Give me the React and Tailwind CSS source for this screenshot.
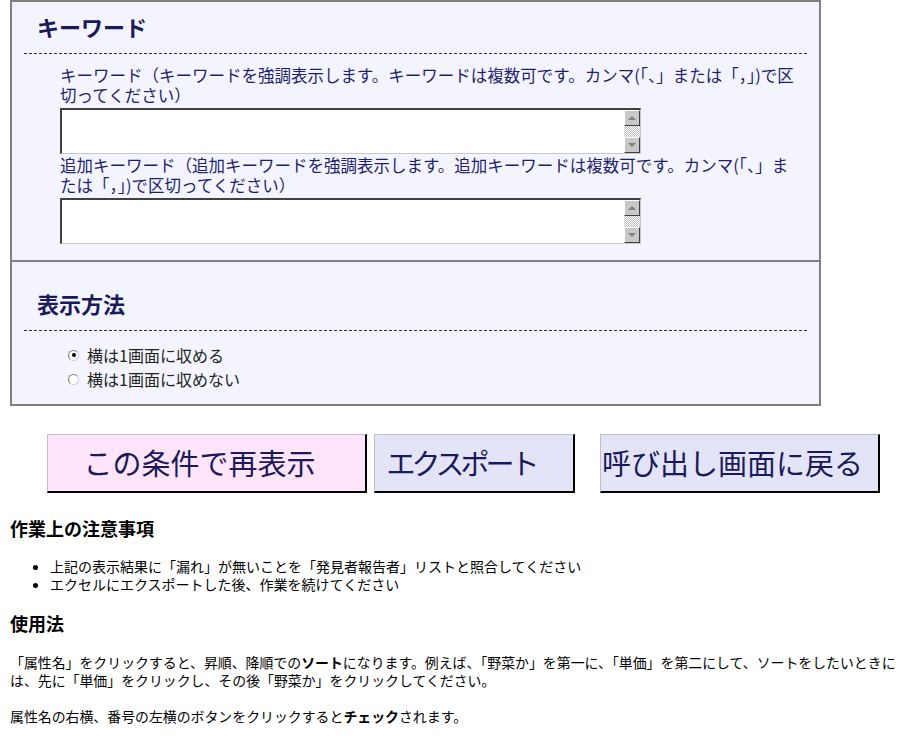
import React from 'react';

const jp = { fontFamily: '"Noto Sans CJK JP", "Noto Sans", sans-serif' };

function FakeTextarea() {
  return (
    <div className="flex w-[581px] h-[46px] bg-white border-t-2 border-l-2 border-b border-r border-t-[#404040] border-l-[#404040] border-b-[#c8c8c8] border-r-[#c8c8c8]">
      <textarea className="flex-1 resize-none outline-none border-0 bg-white px-1 text-[14px]" />
      <div className="flex flex-col w-[16px] shrink-0">
        <div className="h-[16px] flex items-center justify-center bg-[#c8c8c8] border border-t-white border-l-white border-b-[#404040] border-r-[#404040]">
          <span className="w-0 h-0 border-l-[4px] border-r-[4px] border-b-[4px] border-l-transparent border-r-transparent border-b-[#808080]" />
        </div>
        <div className="flex-1 bg-[repeating-conic-gradient(#c0c0c0_0_25%,#ffffff_0_50%)] bg-[length:2px_2px]" />
        <div className="h-[16px] flex items-center justify-center bg-[#c8c8c8] border border-t-white border-l-white border-b-[#404040] border-r-[#404040]">
          <span className="w-0 h-0 border-l-[4px] border-r-[4px] border-t-[4px] border-l-transparent border-r-transparent border-t-[#808080]" />
        </div>
      </div>
    </div>
  );
}

function Radio({ checked, label }) {
  return (
    <label className="flex items-center h-[24px] pl-[56px] text-[16px] text-[#222]">
      <span className="w-[11px] h-[11px] rounded-full bg-white border border-t-[#808080] border-l-[#808080] border-b-[#d0d0d0] border-r-[#d0d0d0] flex items-center justify-center">
        {checked && <span className="w-[4px] h-[4px] rounded-full bg-black" />}
      </span>
      <span className="ml-[8px]">{label}</span>
    </label>
  );
}

export default function App() {
  return (
    <div className="w-[916px] h-[746px] overflow-hidden bg-white text-black" style={jp}>
      {/* 条件パネル */}
      <div className="ml-[10px] w-[811px] bg-[#f4f4ff] border-2 border-[#808080]">
        <div className="pt-[10px] pb-[16px]">
          <h2 className="pl-[25px] h-[28px] leading-[28px] text-[22px] font-bold text-[#1a1a5a]">キーワード</h2>
          <div className="mx-[12px] mt-[13px] border-t border-dashed border-[#333]" />
          <div className="pl-[48px] mt-[11px] text-[16.5px] leading-[20px] text-[#1e1e6e]">
            <div className="whitespace-nowrap">キーワード（キーワードを強調表示します。キーワードは複数可です。カンマ(「、」または「，」)で区</div>
            <div className="whitespace-nowrap">切ってください）</div>
            <div className="mt-[3px]">
              <FakeTextarea />
            </div>
            <div className="mt-[1px] whitespace-nowrap">追加キーワード（追加キーワードを強調表示します。追加キーワードは複数可です。カンマ(「、」ま</div>
            <div className="whitespace-nowrap">たは「，」)で区切ってください）</div>
            <div className="mt-[3px]">
              <FakeTextarea />
            </div>
          </div>
        </div>
        <div className="border-t-2 border-[#808080] pt-[27px] pb-[13px]">
          <h2 className="pl-[25px] h-[28px] leading-[28px] text-[22px] font-bold text-[#1a1a5a]">表示方法</h2>
          <div className="mx-[12px] mt-[13px] border-t border-dashed border-[#333]" />
          <div className="mt-[12px]">
            <Radio checked label="横は1画面に収める" />
            <Radio label="横は1画面に収めない" />
          </div>
        </div>
      </div>

      {/* ボタン */}
      <div className="flex ml-[47px] mt-[28px]">
        <button className="w-[320px] h-[59px] pr-[14px] bg-[#ffe4fa] text-[29px] text-[#1a1a5a] border border-t-[#c0c0c0] border-l-[#c0c0c0] border-b-2 border-r-2 border-b-black border-r-black">
          この条件で再表示
        </button>
        <button className="ml-[7px] w-[201px] h-[59px] pr-[26px] bg-[#e4e4f8] text-[29px] tracking-[-4px] text-[#1a1a5a] border border-t-[#c0c0c0] border-l-[#c0c0c0] border-b-2 border-r-2 border-b-black border-r-black">
          エクスポート
        </button>
        <button className="ml-[25px] w-[280px] h-[59px] pr-[14px] bg-[#e4e4f8] text-[29px] text-[#1a1a5a] border border-t-[#c0c0c0] border-l-[#c0c0c0] border-b-2 border-r-2 border-b-black border-r-black">
          呼び出し画面に戻る
        </button>
      </div>

      {/* 説明 */}
      <div className="px-[10px]">
        <h3 className="mt-[23px] h-[24px] leading-[24px] text-[18px] font-bold">作業上の注意事項</h3>
        <ul className="mt-[17px] pl-[40px] list-disc text-[14px] leading-[18px]">
          <li>上記の表示結果に「漏れ」が無いことを「発見者報告者」リストと照合してください</li>
          <li>エクセルにエクスポートした後、作業を続けてください</li>
        </ul>
        <h3 className="mt-[18px] h-[24px] leading-[24px] text-[18px] font-bold">使用法</h3>
        <div className="mt-[18px] text-[13.9px] leading-[18px] whitespace-nowrap">
          <div>
            「属性名」をクリックすると、昇順、降順での<b>ソート</b>になります。例えば、「野菜か」を第一に、「単価」を第二にして、ソートをしたいときに
          </div>
          <div>は、先に「単価」をクリックし、その後「野菜か」をクリックしてください。</div>
        </div>
        <p className="mt-[18px] text-[13.9px] leading-[18px]">
          属性名の右横、番号の左横のボタンをクリックすると<b>チェック</b>されます。
        </p>
        <p className="mt-[18px] text-[13.9px] leading-[18px]">
          「チェック」された行は、背景色が変わり、もう一度クリックすると解除されます。
        </p>
      </div>
    </div>
  );
}
